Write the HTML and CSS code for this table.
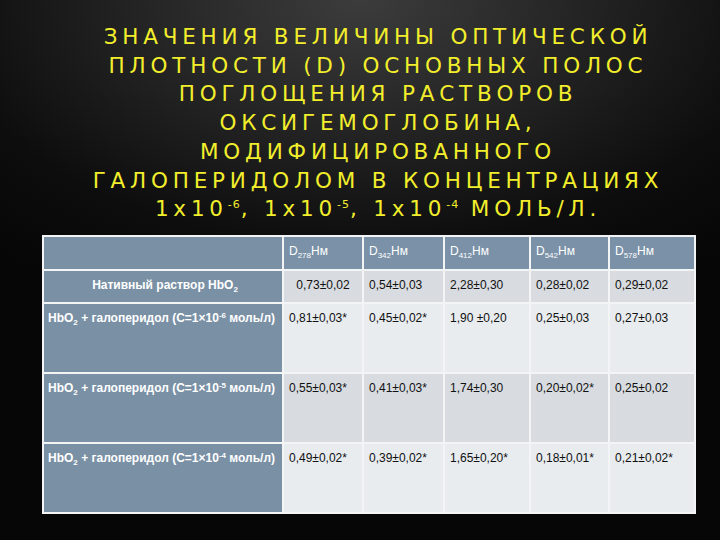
FILE: index.html
```html
<!DOCTYPE html>
<html lang="ru">
<head>
<meta charset="utf-8">
<title>Оптическая плотность</title>
<link rel="stylesheet" href="styles.css">
</head>
<body>
<div class="slide">
  <h1 class="title">
    <span class="line">ЗНАЧЕНИЯ ВЕЛИЧИНЫ ОПТИЧЕСКОЙ</span>
    <span class="line">ПЛОТНОСТИ (D) ОСНОВНЫХ ПОЛОС</span>
    <span class="line">ПОГЛОЩЕНИЯ РАСТВОРОВ</span>
    <span class="line">ОКСИГЕМОГЛОБИНА,</span>
    <span class="line">МОДИФИЦИРОВАННОГО</span>
    <span class="line">ГАЛОПЕРИДОЛОМ В КОНЦЕНТРАЦИЯХ</span>
    <span class="line">1x10<sup>-6</sup>, 1x10<sup>-5</sup>, 1x10<sup>-4</sup> МОЛЬ/Л.</span>
  </h1>
  <table class="data">
    <colgroup>
      <col class="c0"><col class="c1"><col class="c2"><col class="c3"><col class="c4"><col class="c5">
    </colgroup>
    <tr class="head">
      <td class="label"></td>
      <td>D<sub>278</sub>Нм</td>
      <td>D<sub>342</sub>Нм</td>
      <td>D<sub>412</sub>Нм</td>
      <td>D<sub>542</sub>Нм</td>
      <td>D<sub>578</sub>Нм</td>
    </tr>
    <tr class="r1 dark">
      <td class="label center">Нативный раствор HbO<sub>2</sub></td>
      <td class="center">0,73±0,02</td>
      <td>0,54±0,03</td>
      <td>2,28±0,30</td>
      <td>0,28±0,02</td>
      <td>0,29±0,02</td>
    </tr>
    <tr class="tall light">
      <td class="label">HbO<sub>2</sub> + галоперидол (C=1×10<sup>-6</sup> моль/л)</td>
      <td>0,81±0,03*</td>
      <td>0,45±0,02*</td>
      <td>1,90 ±0,20</td>
      <td>0,25±0,03</td>
      <td>0,27±0,03</td>
    </tr>
    <tr class="tall dark">
      <td class="label">HbO<sub>2</sub> + галоперидол (C=1×10<sup>-5</sup> моль/л)</td>
      <td>0,55±0,03*</td>
      <td>0,41±0,03*</td>
      <td>1,74±0,30</td>
      <td>0,20±0,02*</td>
      <td>0,25±0,02</td>
    </tr>
    <tr class="tall light">
      <td class="label">HbO<sub>2</sub> + галоперидол (C=1×10<sup>-4</sup> моль/л)</td>
      <td>0,49±0,02*</td>
      <td>0,39±0,02*</td>
      <td>1,65±0,20*</td>
      <td>0,18±0,01*</td>
      <td>0,21±0,02*</td>
    </tr>
  </table>
</div>
</body>
</html>
```
FILE: styles.css
```css
html, body {
  margin: 0;
  padding: 0;
  height: 100%;
}
body {
  background: #000;
}
.slide {
  width: 720px;
  height: 540px;
  box-sizing: border-box;
  padding: 23px 26px 0 42px;
  background: radial-gradient(ellipse 560px 330px at 50% 0%, #3c3c3c 0%, #2a2a2a 30%, #0d0d0d 75%, #060606 100%);
  overflow: hidden;
}
.title {
  margin: 0 0 11px -24px;
  width: 720px;
  text-align: center;
  font-family: "DejaVu Sans", sans-serif;
  font-weight: normal;
  font-size: 21.5px;
  line-height: 28.7px;
  letter-spacing: 4.8px;
  color: #f2ee2c;
}
.title .line {
  display: block;
}
.title sup {
  font-size: 11px;
  line-height: 0;
  vertical-align: 8px;
  letter-spacing: 1px;
}
.data {
  border-collapse: collapse;
  table-layout: fixed;
  width: 652px;
  font-family: "Liberation Sans", Arial, sans-serif;
  font-size: 12px;
  line-height: 14px;
  border: 1px solid #f4f4f4;
}
.c0 { width: 240px; }
.c1 { width: 80px; }
.c2 { width: 81px; }
.c3 { width: 86px; }
.c4 { width: 79px; }
.c5 { width: 86px; }
.data td {
  border: 2px solid #f2f4f6;
  padding: 7px 5px 0 5px;
  vertical-align: top;
  color: #111;
  white-space: nowrap;
}
.data sub, .data sup {
  font-size: 8px;
  line-height: 0;
}
.data sub { vertical-align: -3px; }
.data sup { vertical-align: 4px; }
.head td {
  background: #7a91a7;
  color: #fff;
  height: 25px;
}
.r1 td { height: 24px; }
.tall td { height: 61px; }
.dark td { background: #d8dce0; }
.light td { background: #e8ecef; }
.data td.label {
  background: #7a90a5;
  color: #fff;
  font-size: 12px;
  font-weight: bold;
  padding-left: 4px;
  padding-right: 0;
  overflow: hidden;
}
.data td.center {
  text-align: center;
}
```
